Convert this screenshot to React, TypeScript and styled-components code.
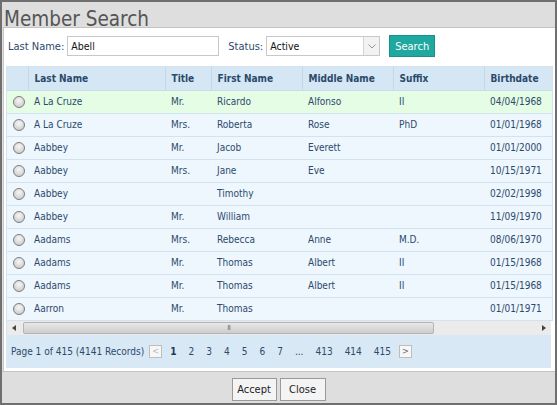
import React from 'react';
import styled, { createGlobalStyle } from 'styled-components';

const GlobalStyle = createGlobalStyle`
  html, body {
    margin: 0;
    padding: 0;
    background: #ffffff;
  }
`;

const FONT = `'DejaVu Sans Condensed', 'DejaVu Sans', 'Liberation Sans', sans-serif`;
const TEXT = '#2c4a6b';

const Dialog = styled.div`
  width: 557px;
  height: 405px;
  box-sizing: border-box;
  border: 2px solid #6f6f6f;
  background: #dedede;
  display: flex;
  flex-direction: column;
  font-family: ${FONT};
  font-stretch: condensed;
`;

const TitleBar = styled.div`
  height: 25px;
  flex: none;
  box-sizing: border-box;
  padding: 6px 0 0 2px;
  font-size: 20.5px;
  line-height: 22px;
  color: #555555;
  white-space: nowrap;
`;

const Panel = styled.div`
  height: 344px;
  flex: none;
  box-sizing: border-box;
  margin-left: 1px;
  border-top: 1px solid #c4c4c4;
  border-left: 1px solid #c8c8c8;
  background: #ffffff;
  padding: 7px 3px 0 2px;
  display: flex;
  flex-direction: column;
`;

const FilterRow = styled.div`
  display: flex;
  align-items: center;
  height: 22px;
  padding-left: 2px;
  font-size: 11px;
  color: ${TEXT};
`;

const Label = styled.span<{ $gap?: number }>`
  margin-left: ${({ $gap }) => $gap ?? 0}px;
  margin-right: 3px;
`;

const TextInput = styled.div<{ $width: number }>`
  width: ${({ $width }) => $width}px;
  height: 20px;
  box-sizing: border-box;
  border: 1px solid #c8c8c8;
  padding: 0 3px;
  line-height: 18px;
  font-size: 10.5px;
  color: #111111;
  display: flex;
  align-items: center;
  justify-content: space-between;
`;

const SelectArrow = styled.div`
  width: 15px;
  height: 18px;
  margin-right: -3px;
  border-left: 1px solid #d4d4d4;
  background: #f2f2f2;
  display: flex;
  align-items: center;
  justify-content: center;
`;

const SearchButton = styled.button`
  margin-left: 9px;
  width: 46px;
  height: 22px;
  border: 1px solid #17918a;
  background: #1fa89f;
  color: #ffffff;
  font-family: ${FONT};
  font-stretch: condensed;
  font-size: 11px;
  padding: 0;
`;

const GridBox = styled.div`
  margin-top: 9px;
  width: 545px;
  border: 1px solid #d6e3ee;
  border-bottom: none;
  overflow: hidden;
  background: #eef6fe;
`;

const Table = styled.table`
  border-collapse: collapse;
  table-layout: fixed;
  width: 580px;
  font-size: 10px;
  color: ${TEXT};
`;

const HeadCell = styled.th<{ $width: number }>`
  box-sizing: border-box;
  width: ${({ $width }) => $width}px;
  height: 23px;
  padding: 0 0 0 6px;
  text-align: left;
  font-weight: bold;
  color: #2a4a6a;
  background: #d5e6f4;
  border-left: 1px solid #c2d7e9;
  border-bottom: 1px solid #c9dcec;
  white-space: nowrap;
  overflow: hidden;
  &:first-child {
    border-left: none;
  }
`;

const Row = styled.tr<{ $selected?: boolean }>`
  background: ${({ $selected }) => ($selected ? '#e5fce5' : '#eef6fe')};
`;

const Cell = styled.td`
  box-sizing: border-box;
  height: 23px;
  padding: 0 0 0 6px;
  border-bottom: 1px solid #d2e2ef;
  white-space: nowrap;
  overflow: hidden;
`;

const RadioCell = styled(Cell)`
  padding-left: 6px;
`;

const Radio = styled.span`
  display: block;
  width: 10px;
  height: 10px;
  border-radius: 50%;
  border: 1px solid #7e7e7e;
  background: radial-gradient(circle at 50% 35%, #f6f6f6 0%, #d8d8d8 60%, #c0c0c0 100%);
`;

const ScrollBar = styled.div`
  width: 545px;
  height: 14px;
  flex: none;
  box-sizing: border-box;
  border-left: 1px solid #d6e3ee;
  background: #ebebeb;
  display: flex;
  align-items: center;
`;

const ScrollArrow = styled.div`
  width: 14px;
  height: 14px;
  display: flex;
  align-items: center;
  justify-content: center;
`;

const ScrollThumb = styled.div`
  margin-left: 2px;
  width: 411px;
  height: 12px;
  box-sizing: border-box;
  border: 1px solid #b3b3b3;
  border-radius: 2px;
  background: linear-gradient(#e8e8e8, #cdcdcd);
  display: flex;
  align-items: center;
  justify-content: center;
  font-size: 7px;
  color: #777777;
  letter-spacing: -1px;
`;

const ScrollSpacer = styled.div`
  flex: 1;
`;

const Pager = styled.div`
  width: 545px;
  height: 33px;
  flex: none;
  box-sizing: border-box;
  background: #d9e8f5;
  display: flex;
  align-items: center;
  padding-left: 5px;
  font-size: 10px;
  color: ${TEXT};
`;

const PageInfo = styled.span`
  margin-right: 3px;
`;

const PageArrow = styled.span<{ $dim?: boolean }>`
  width: 13px;
  height: 13px;
  box-sizing: border-box;
  border: 1px solid #bdbdbd;
  background: #f7f7f7;
  color: ${({ $dim }) => ($dim ? '#b8b8b8' : '#666666')};
  font-size: 9px;
  display: flex;
  align-items: center;
  justify-content: center;
  margin: 0 2px;
`;

const PageNum = styled.span<{ $active?: boolean }>`
  padding: 0 6px;
  font-weight: ${({ $active }) => ($active ? 'bold' : 'normal')};
  color: ${({ $active }) => ($active ? '#1d3855' : TEXT)};
`;

const Footer = styled.div`
  flex: 1;
  display: flex;
  justify-content: center;
  align-items: center;
  gap: 3px;
  border-top: 1px solid #c4c4c4;
  padding-top: 3px;
`;

const FooterButton = styled.button<{ $width: number }>`
  width: ${({ $width }) => $width}px;
  height: 23px;
  border: 1px solid #9a9a9a;
  background: #f4f4f4;
  color: #222222;
  font-family: ${FONT};
  font-stretch: condensed;
  font-size: 11px;
  padding: 0;
`;

const columns = [
  { key: 'radio', label: '', width: 21 },
  { key: 'last', label: 'Last Name', width: 137 },
  { key: 'title', label: 'Title', width: 46 },
  { key: 'first', label: 'First Name', width: 91 },
  { key: 'middle', label: 'Middle Name', width: 91 },
  { key: 'suffix', label: 'Suffix', width: 91 },
  { key: 'birth', label: 'Birthdate', width: 103 },
];

const members = [
  ['A La Cruze', 'Mr.', 'Ricardo', 'Alfonso', 'II', '04/04/1968'],
  ['A La Cruze', 'Mrs.', 'Roberta', 'Rose', 'PhD', '01/01/1968'],
  ['Aabbey', 'Mr.', 'Jacob', 'Everett', '', '01/01/2000'],
  ['Aabbey', 'Mrs.', 'Jane', 'Eve', '', '10/15/1971'],
  ['Aabbey', '', 'Timothy', '', '', '02/02/1998'],
  ['Aabbey', 'Mr.', 'William', '', '', '11/09/1970'],
  ['Aadams', 'Mrs.', 'Rebecca', 'Anne', 'M.D.', '08/06/1970'],
  ['Aadams', 'Mr.', 'Thomas', 'Albert', 'II', '01/15/1968'],
  ['Aadams', 'Mr.', 'Thomas', 'Albert', 'II', '01/15/1968'],
  ['Aarron', 'Mr.', 'Thomas', '', '', '01/01/1971'],
];

const pages = ['1', '2', '3', '4', '5', '6', '7', '...', '413', '414', '415'];

export default function App() {
  return (
    <>
      <GlobalStyle />
      <Dialog>
        <TitleBar>Member Search</TitleBar>
        <Panel>
          <FilterRow>
            <Label>Last Name:</Label>
            <TextInput $width={152}>Abell</TextInput>
            <Label $gap={9}>Status:</Label>
            <TextInput $width={114}>
              Active
              <SelectArrow>
                <svg width="8" height="5" viewBox="0 0 8 5">
                  <path d="M0.5 0.5 L4 4 L7.5 0.5" fill="none" stroke="#999" strokeWidth="1" />
                </svg>
              </SelectArrow>
            </TextInput>
            <SearchButton>Search</SearchButton>
          </FilterRow>

          <GridBox>
            <Table>
              <thead>
                <tr>
                  {columns.map((c) => (
                    <HeadCell key={c.key} $width={c.width}>
                      {c.label}
                    </HeadCell>
                  ))}
                </tr>
              </thead>
              <tbody>
                {members.map((m, i) => (
                  <Row key={i} $selected={i === 0}>
                    <RadioCell>
                      <Radio />
                    </RadioCell>
                    {m.map((v, j) => (
                      <Cell key={j}>{v}</Cell>
                    ))}
                  </Row>
                ))}
              </tbody>
            </Table>
          </GridBox>

          <ScrollBar>
            <ScrollArrow>
              <svg width="4" height="6" viewBox="0 0 4 6">
                <path d="M4 0 L0 3 L4 6 Z" fill="#444" />
              </svg>
            </ScrollArrow>
            <ScrollThumb>III</ScrollThumb>
            <ScrollSpacer />
            <ScrollArrow>
              <svg width="4" height="6" viewBox="0 0 4 6">
                <path d="M0 0 L4 3 L0 6 Z" fill="#444" />
              </svg>
            </ScrollArrow>
          </ScrollBar>

          <Pager>
            <PageInfo>Page 1 of 415 (4141 Records)</PageInfo>
            <PageArrow $dim>&lt;</PageArrow>
            {pages.map((p, i) => (
              <PageNum key={i} $active={i === 0}>
                {p}
              </PageNum>
            ))}
            <PageArrow>&gt;</PageArrow>
          </Pager>
        </Panel>
        <Footer>
          <FooterButton $width={45}>Accept</FooterButton>
          <FooterButton $width={46}>Close</FooterButton>
        </Footer>
      </Dialog>
    </>
  );
}
